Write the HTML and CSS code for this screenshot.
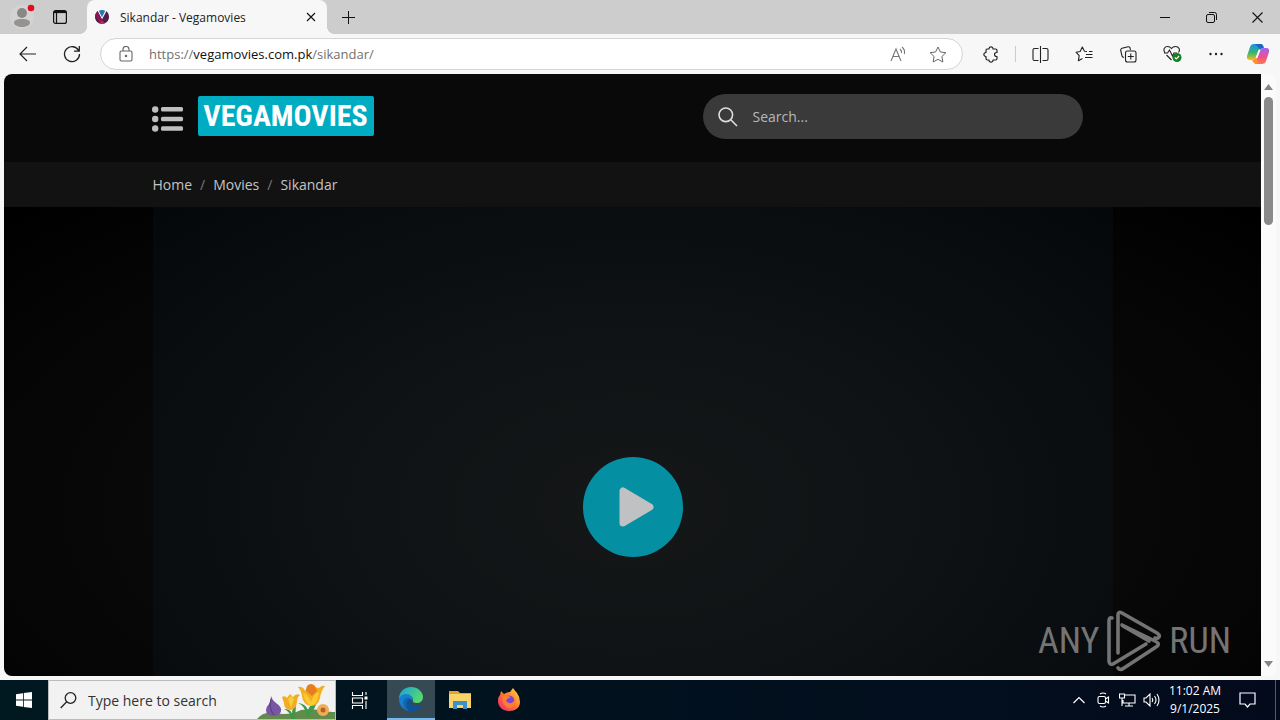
FILE: index.html
```html
<!DOCTYPE html>
<html lang="en">
<head>
<meta charset="utf-8">
<title>Sikandar - Vegamovies</title>
<link rel="stylesheet" href="styles.css">
</head>
<body>
<div class="desktop">
  <div class="tabstrip">
    <button class="profile" aria-label="Profile">
      <svg width="26" height="26" viewBox="0 0 26 26"><circle cx="13" cy="13" r="12" fill="#d5d3d1"/><circle cx="13" cy="9" r="5" fill="#8b8785"/><path d="M5 19c0-3 3-4 8-4s8 1 8 4c0 2-4 4-8 4s-8-2-8-4z" fill="#96928f"/><circle cx="22" cy="4" r="3.3" fill="#e30b20"/></svg>
    </button>
    <button class="workspaces" aria-label="Tab actions">
      <svg width="16" height="16" viewBox="0 0 16 16" fill="none" stroke="#111" stroke-width="1.2"><rect x="1.6" y="1.6" width="12.8" height="12.8" rx="2"/><path d="M2 3h12" stroke-width="2.2"/><path d="M4.500 4v10"/></svg>
    </button>
    <div class="tab">
      <svg width="14" height="14" viewBox="0 0 14 14"><path d="M2.500 1Q0 3.500 0 7c0 4 3.500 7 7 7s7-3 7-7q0-3.500-2.500-6L7 9.500z" fill="#4f1d4c"/><path d="M2.500 1L0 5l4.500 7.500L7 14l2.500-1.500L7 9.500z" fill="#8c1650"/><path d="M3.800.8Q7-.8 10.200.8L7 7.200z" fill="#2478b0"/><path d="M5 13l2-2.500L9 13l-2 1z" fill="#d02765"/></svg>
      <span class="tab-title">Sikandar - Vegamovies</span>
      <button class="tab-close" aria-label="Close tab"><svg width="10" height="10" viewBox="0 0 10 10" stroke="#111" stroke-width="1.1"><path d="M1 1l8 8M9 1L1 9"/></svg></button>
    </div>
    <button class="newtab" aria-label="New tab"><svg width="15" height="15" viewBox="0 0 15 15" stroke="#111"><path d="M7.500 1v13M1 7.500h13"/></svg></button>
    <div class="window-buttons">
      <button aria-label="Minimize"><svg width="10" height="10" viewBox="0 0 10 10" stroke="#111"><path d="M0 5.500h10"/></svg></button>
      <button aria-label="Restore"><svg width="11" height="11" viewBox="0 0 11 11" fill="none" stroke="#111"><rect x=".5" y="2.500" width="8" height="8" rx="1.500"/><path d="M3 .5h5.500a2 2 0 0 1 2 2V8"/></svg></button>
      <button aria-label="Close"><svg width="11" height="11" viewBox="0 0 11 11" stroke="#111" stroke-width="1.100"><path d="M.5.5l10 10M10.500.5l-10 10"/></svg></button>
    </div>
  </div>

  <div class="toolbar">
    <button class="tool" aria-label="Back"><svg width="18" height="16" viewBox="0 0 18 16" fill="none" stroke="#222" stroke-width="1.2"><path d="M8 1L1 8l7 7M1 8h16"/></svg></button>
    <button class="tool" aria-label="Refresh"><svg width="18" height="18" viewBox="0 0 18 18" fill="none" stroke="#222" stroke-width="1.3"><path d="M15.800 6A7.500 7.500 0 1 0 16.500 9M16.300 1v5.200H11"/></svg></button>
    <div class="address">
      <svg width="14" height="16" viewBox="0 0 14 16" fill="none" stroke="#666" stroke-width="1.1"><rect x="1" y="5" width="12" height="10" rx="1.500"/><path d="M4 5V3.500a3 3 0 0 1 6 0V5"/><circle cx="7" cy="10" r=".7" fill="#666"/></svg>
      <div class="url"><span>https://</span>vegamovies.com.pk<span>/sikandar/</span></div>
      <button aria-label="Read aloud"><svg width="17" height="16" viewBox="0 0 17 16" fill="none" stroke="#777" stroke-width="1.1"><path d="M1 15L6 3l5 12M3 10.500h6M10 3q2 2 1.500 4M12 1q3.500 3 2.300 7" /></svg></button>
      <button aria-label="Add to favorites"><svg width="18" height="17" viewBox="0 0 18 17" fill="none" stroke="#666" stroke-linejoin="round"><path d="M9 1l2.400 5 5.500.7-4 3.800 1 5.500L9 13.300 4.100 16l1-5.500-4-3.800 5.500-.7z"/></svg></button>
    </div>
    <button class="tool" aria-label="Extensions"><svg width="16" height="17" viewBox="0 0 16 17" fill="none" stroke="#222" stroke-width="1.2" stroke-linejoin="round"><path d="M4 3h2C5.800.2 10.200.2 10 3h2.500q1.500 0 1.500 1.500v2c-3.300-.3-3.300 4.300 0 4v2q0 1.500-1.500 1.500H10c.2 2.800-4.200 2.800-4 0H4.500Q3 14 3 12.500v-2C.2 10.700.2 6.300 3 6.500v-2Q3 3 4 3z"/></svg></button>
    <span class="tool-sep"></span>
    <button class="tool" aria-label="Split screen"><svg width="17" height="17" viewBox="0 0 17 17" fill="none" stroke="#222" stroke-width="1.1"><path d="M6.500 2.500H2.500q-1.500 0-1.500 1.500v9q0 1.500 1.500 1.500h4M10.500 2.500h4q1.500 0 1.500 1.500v9q0 1.500-1.500 1.500h-4M8.500 0v17"/></svg></button>
    <button class="tool" aria-label="Favorites"><svg width="18" height="17" viewBox="0 0 18 17" fill="none" stroke="#222" stroke-width="1.1" stroke-linejoin="round"><path d="M12 5.500L9.500 5.200 7.300 1 5.200 5.500 1 6.200l3.200 3.500-.8 5L7.500 12.500M11 8.500h6.500M14 5.500h3.500M10 11.500h7.500"/></svg></button>
    <button class="tool" aria-label="Collections"><svg width="17" height="17" viewBox="0 0 17 17" fill="none" stroke="#222" stroke-width="1.1"><path d="M4 11.500q-1.500-.2-2-1.500L.7 4.500Q.5 3 2 2.300L8 .8q1.500-.2 2 1l.5 2"/><rect x="5.500" y="5" width="10.500" height="11" rx="2"/><path d="M10.800 7.500v6M7.800 10.500h6"/></svg></button>
    <button class="tool" aria-label="Browser essentials"><svg width="19" height="18" viewBox="0 0 19 18" fill="none" stroke="#222" stroke-width="1.1"><path d="M2 8C-.5 4 2 1.500 4.500 1.500q2.500 0 4 2 1.500-2 4-2C16 1.500 17.500 5 15.500 7.500M1 8h3.500L6.500 5l3 6L11 8h3M3.500 10l5 5"/><circle cx="14" cy="12.500" r="4.500" fill="#138020" stroke="none"/><path d="M11.800 12.500l1.500 1.500 2.800-3" stroke="#fff"/></svg></button>
    <button class="tool" aria-label="Settings and more"><svg width="14" height="4" viewBox="0 0 14 4" fill="#222"><circle cx="1.500" cy="2" r="1.200"/><circle cx="7" cy="2" r="1.200"/><circle cx="12.500" cy="2" r="1.200"/></svg></button>
    <button class="tool copilot" aria-label="Copilot"><svg width="22" height="20" viewBox="0 0 22 20"><defs><linearGradient id="ca" x2="0" y2="1"><stop stop-color="#1793e8"/><stop offset=".55" stop-color="#37b56f"/><stop offset="1" stop-color="#f8bf18"/></linearGradient><linearGradient id="cb" x2="0" y2="1"><stop stop-color="#a163ed"/><stop offset=".55" stop-color="#ee4f8e"/><stop offset="1" stop-color="#ff7a45"/></linearGradient></defs><path d="M7 0h8l-2 3-4 10q-1 3-4 3H3q-4 0-3-4L3 3q1-3 4-3z" fill="url(#ca)"/><path d="M15 20H8l1-3 4-10q1-3 4-3h2q4 0 3 4l-3 9q-1 3-4 3z" fill="url(#cb)"/><path d="M8 0h6q2 0 3 4-3 0-4 2l-2-3z" fill="#1767c4"/><path d="M5 16q3 0 4-3l2 4-1 3H9q-2 0-4-4z" fill="#ff8b32"/><path d="M11.500 6h1.800l-3 8H8.700z" fill="#f7f7f7"/></svg></button>
  </div>

  <div class="viewport">
    <main class="page">
      <header class="site-header">
        <div class="container header-row">
          <button class="menu" aria-label="Menu"><svg width="32" height="26" viewBox="0 0 32 26" fill="#bfbfbf"><circle cx="3.200" cy="3.500" r="3.200"/><circle cx="3.200" cy="13" r="3.200"/><circle cx="3.200" cy="22.500" r="3.200"/><rect x="9" y="1" width="22" height="4.500" rx="1.500"/><rect x="9" y="10.700" width="22" height="4.500" rx="1.500"/><rect x="9" y="20.300" width="22" height="4.500" rx="1.500"/></svg></button>
          <a class="brand" href="#">VEGAMOVIES</a>
          <label class="search">
            <svg width="20" height="20" viewBox="0 0 20 20" fill="none" stroke="#ddd" stroke-width="1.600"><circle cx="7.800" cy="7.800" r="6.800"/><path d="M12.800 12.800L19 19"/></svg>
            <input type="text" placeholder="Search..." aria-label="Search">
          </label>
        </div>
      </header>
      <nav class="crumbs" aria-label="Breadcrumb">
        <div class="container crumb-row"><a href="#">Home</a><span>/</span><a href="#">Movies</a><span>/</span><a href="#">Sikandar</a></div>
      </nav>
      <section class="hero">
        <div class="container player">
          <button class="play" aria-label="Play"><svg width="100" height="100" viewBox="0 0 100 100"><path d="M40 34v32L67 50z" fill="#bfc1c2" stroke="#bfc1c2" stroke-width="7" stroke-linejoin="round"/></svg></button>
        </div>
      </section>
    </main>
    <div class="scrollbar">
      <svg width="9" height="6" viewBox="0 0 9 6" fill="#858585"><path d="M4.500 0L9 6H0z"/></svg>
      <div class="thumb"></div>
      <svg width="9" height="6" viewBox="0 0 9 6" fill="#858585"><path d="M4.500 6L9 0H0z"/></svg>
    </div>
    <div class="watermark">
      <span>ANY</span>
      <svg width="56" height="62" viewBox="0 0 56 62" fill="none" stroke="#747474" stroke-width="3.600" stroke-linecap="round" stroke-linejoin="round"><path d="M12 43V5q0-4 4-2L51 23q3 2 2 4-1 2-4 1"/><path d="M16 15l33 16q6 3 1 6L18 58q-4 3-6 0"/><path d="M6 8q-3-1-3 3v40q0 4 4 3l33-20"/><path d="M17 16l26 15"/></svg>
      <span>RUN</span>
    </div>
  </div>

  <div class="taskbar">
    <button class="start" aria-label="Start"><svg width="16" height="16" viewBox="0 0 16 16" fill="#fff"><path d="M0 2.200l7-1v6.400H0zM7.800 1L16 0v7.600H7.800zM0 8.400h7v6.400l-7-1zM7.800 8.400H16V16l-8.200-1z"/></svg></button>
    <label class="task-search">
      <svg width="17" height="17" viewBox="0 0 17 17" fill="none" stroke="#222" stroke-width="1.300"><circle cx="10.500" cy="6" r="5.300"/><path d="M6.700 9.800L.7 16"/></svg>
      <input type="text" placeholder="Type here to search" aria-label="Type here to search">
      <svg width="78" height="38" viewBox="0 0 78 38" class="flowers"><path d="M0 38q7-8 18-6 14 3 26-3 14-2 22 1 8 1 12 1v7z" fill="#628b4c"/><path d="M34 38q-1-8-7-10 7 0 8 5 0-7 4-9l-1 14z" fill="#439447"/><path d="M49 33q-1-8-8-11 8 1 10 7 2-6 9-9-2 9-7 12l-1 5z" fill="#3c9b48"/><path d="M14 15q1 4 5 7 6 4 5 8-1 5-7 5-8 0-8-6 0-3 3-6 2-3 2-8z" fill="#7856a3"/><path d="M14 18q-3 9 3 16" stroke="#56367b" fill="none"/><path d="M25 16q3-2 5 1l3-4 3 3q3-4 7-2-3 2-3 7-1 8-7 8-6-1-6-7z" fill="#f2ac22"/><path d="M31 18l3-3 3 3-3 9z" fill="#f7ce3c"/><path d="M41 6q5-1 7 4l3-6 6 2 5 1q3-3 6-2-4 5-5 12-2 8-9 8-8-1-9-10-1-6-4-9z" fill="#f3ae22"/><path d="M50 5q4-4 8 0l2 5-5 5-6-5z" fill="#e87c1e"/><path d="M46 12q4 0 8 9 3-9 8-10-1 12-8 14-6-3-8-13z" fill="#fccb32"/><circle cx="66" cy="29" r="6" fill="#eeae59"/><circle cx="66" cy="29" r="2.500" fill="#bd601f"/></svg>
    </label>
    <div class="apps">
      <button aria-label="Task view"><svg width="18" height="17" viewBox="0 0 18 17" fill="none" stroke="#fff" stroke-width="1.100"><path d="M1.500 0v3.500h10V0M1.500 17v-3.500h10V17M15 0v3M15 9v8"/><path d="M1.500 5.500v6M11.500 5.500v6M1.500 6h10M1.500 11h10"/><path d="M13.500 6h3" stroke-width="3"/></svg></button>
      <button class="active" aria-label="Microsoft Edge"><svg width="24" height="24" viewBox="0 0 24 24"><defs><linearGradient id="eg" x2="1" y2=".5"><stop stop-color="#1ba0dc"/><stop offset="1" stop-color="#54d86d"/></linearGradient></defs><path d="M0 12C0 5 5 0 12 0s12 5 12 10c0 4-3 6-6 6-3 0-5-1-4-3 0-3-3-5-6-5-4 0-7 2-8 4z" fill="url(#eg)"/><path d="M0 12q2-5 7-5c4 0 7 3 7 6-4-2-8 8 3 9-2 2-5 2-7 2C4 23 0 18 0 12z" fill="#1480d2"/><path d="M11 11q-6 6-1 13c-5-1-7-7-5-11q2-3 6-2z" fill="#1467aa"/><path d="M10 24c-6-7 0-14 2-12-2 7 5 8 11 6-3 5-8 7-13 6z" fill="#105298"/></svg></button>
      <button aria-label="File Explorer"><svg width="22" height="18" viewBox="0 0 22 18"><path d="M0 0h9l2 2h11v15H0z" fill="#e7a32f"/><path d="M0 3h22v14H0z" fill="#fbd469"/><path d="M4 10h14v8h-4v-4H8v4H4z" fill="#3b92cb"/></svg></button>
      <button aria-label="Firefox"><svg width="24" height="24" viewBox="0 0 24 24"><defs><linearGradient id="ff" x1="1" x2="0" y2="1"><stop stop-color="#ffe23d"/><stop offset=".5" stop-color="#ff742f"/><stop offset="1" stop-color="#ed247c"/></linearGradient></defs><path d="M3 7l1-4 3 3q3-2 6-2l3-4q2 3 4 5 3 4 3 9c0 6-5 9-11 9S1 19 1 13q0-4 2-6z" fill="url(#ff)"/><circle cx="12" cy="13" r="5.500" fill="#7846d0"/><path d="M5 8q5-1 9 1l-4 2q-2 3 2 4 4 1 6-4 1 8-6 9-7-2-7-12z" fill="#ff7d30"/></svg></button>
    </div>
    <div class="tray">
      <button aria-label="Show hidden icons"><svg width="12" height="8" viewBox="0 0 12 8" fill="none" stroke="#fff" stroke-width="1.200"><path d="M.5 7L6 1.500 11.500 7"/></svg></button>
      <button aria-label="Meet now"><svg width="13" height="16" viewBox="0 0 13 16" fill="none" stroke="#fff" stroke-width="1.100"><rect x="1" y="4.500" width="7.500" height="7" rx="1.500"/><path d="M8.500 7L11.500 5v6l-3-2M3 2q3-2 6 0M3 14q3 2 6 0"/></svg></button>
      <button aria-label="Network"><svg width="17" height="14" viewBox="0 0 17 14" fill="none" stroke="#fff" stroke-width="1.100"><path d="M6 2h10v8H4V7M10 10v3M6 13h8M.5 1h5v4h-5zM3 5v8"/></svg></button>
      <button aria-label="Volume"><svg width="17" height="14" viewBox="0 0 17 14" fill="none" stroke="#fff" stroke-width="1.100"><path d="M1 5h2l4-4v12L3 9H1zM9 5q1.500 2 0 4M11.500 3q3 4 0 8M14 1q4 6 0 12"/></svg></button>
      <div class="clock"><span>11:02 AM</span><span>9/1/2025</span></div>
      <button class="action" aria-label="Notifications"><svg width="17" height="16" viewBox="0 0 17 16" fill="none" stroke="#fff" stroke-width="1.200"><path d="M1 1h15v11h-5l-2.500 3L6 12H1z"/></svg></button>
      <span class="show-desktop"></span>
    </div>
  </div>
</div>
</body>
</html>
```
FILE: styles.css
```css
* { box-sizing: border-box; }
body { margin: 0; font-family: "Open Sans", "Noto Sans", sans-serif; font-size: 14px; }
button { border: 0; padding: 0; background: none; font: inherit; display: flex; align-items: center; justify-content: center; flex: none; }
svg { display: block; flex: none; }
a { color: inherit; text-decoration: none; }
input { border: 0; padding: 0; background: none; font: inherit; outline: 0; min-width: 0; flex: 1; }

.desktop { height: 100vh; display: flex; flex-direction: column; background: #f7f7f7; overflow: hidden; }

.tabstrip { height: 34px; flex: none; display: flex; background: #cdcdcd; }
.profile { width: 44px; }
.workspaces { width: 32px; }
.tab { position: relative; width: 240px; margin-left: 11px; padding: 0 11px 0 8px; display: flex; align-items: center; gap: 11px; background: #f7f7f7; border-radius: 8px 8px 0 0; font-size: 12px; color: #222; }
.tab::before, .tab::after { content: ""; position: absolute; bottom: 0; width: 8px; height: 8px; }
.tab::before { right: 100%; background: radial-gradient(circle at 0 0, transparent 8px, #f7f7f7 8px); }
.tab::after { left: 100%; background: radial-gradient(circle at 100% 0, transparent 8px, #f7f7f7 8px); }
.tab-title { flex: 1; white-space: nowrap; }
.newtab { width: 42px; }
.window-buttons { margin-left: auto; display: flex; }
.window-buttons button { width: 46px; }

.toolbar { height: 40px; flex: none; display: flex; align-items: center; padding: 0 2px 0 6px; }
.tool { width: 44px; height: 32px; }
.copilot { width: 40px; }
.tool-sep { width: 1px; height: 16px; margin: 0 2px; background: #ccc; }
.address { flex: 1; height: 32px; margin: 0 6px; padding: 0 15px 0 18px; display: flex; align-items: center; gap: 16px; background: #fff; border: 1px solid #d4d4d4; border-radius: 16px; }
.address button + button { margin-left: 6px; }
.url { flex: 1; font-size: 13px; color: #111; white-space: nowrap; }
.url span { color: #717171; }

.viewport { position: relative; flex: 1; min-height: 0; margin: 0 4px 4px; display: flex; border-radius: 8px; overflow: hidden; background: #fbfbfb; }
.page { flex: 1; min-width: 0; overflow: hidden; color: #c4c4c4; }
.container { width: 100%; max-width: 960px; margin: 0 auto; }
.site-header { height: 88px; background: #090909; padding-top: 20px; }
.header-row { display: flex; align-items: center; padding-right: 30px; }
.menu { width: 31px; margin-top: 4px; }
.brand { height: 40px; margin: 0 auto 2px 14px; width: 176px; display: flex; align-items: center; justify-content: center; border-radius: 2px; background: #00acc1; color: #fff; font: bold 30px "Liberation Sans Narrow", "Roboto Condensed", "DejaVu Sans Condensed", sans-serif; }
.search { width: 380px; height: 45px; display: flex; align-items: center; gap: 15px; padding: 0 15px; border-radius: 23px; background: #3a3a3a; color: #c0c4c6; }
.search input { color: inherit; }
.search input::placeholder { color: #b4b8ba; opacity: 1; }
.crumbs { background: #121212; }
.crumb-row { height: 45px; display: flex; align-items: center; gap: 8px; }
.crumb-row span { color: #777; }
.hero { height: 600px; background: radial-gradient(ellipse farthest-corner, #131313, #000); }
.player { height: 100%; display: flex; align-items: center; justify-content: center; background: radial-gradient(ellipse farthest-corner, #151718 0%, #0e1214 45%, #04080b 100%); }
.play { width: 100px; height: 100px; border-radius: 50%; background: #048fa2; }
.scrollbar { width: 15px; background: #fbfbfb; display: flex; flex-direction: column; align-items: center; padding: 10px 0 9px; }
.thumb { width: 9px; height: 128px; margin: 7px 0 auto; border-radius: 5px; background: #8a8a8a; }
.watermark { position: absolute; right: 45px; bottom: 4px; display: flex; align-items: center; gap: 7px; color: #747474; font: 36px "Liberation Sans Narrow", "Roboto Condensed", "DejaVu Sans Condensed", sans-serif; }

.taskbar { height: 40px; flex: none; display: flex; background: linear-gradient(90deg, #001820, #02101e 60%, #030a1c); color: #fff; }
.start { width: 48px; }
.task-search { width: 288px; display: flex; align-items: center; gap: 11px; padding-left: 11px; background: #f2f2f2; border: 1px solid #bbb; }
.task-search input { color: #333; }
.task-search input::placeholder { color: #333; opacity: 1; }
.flowers { align-self: flex-end; }
.apps { display: flex; gap: 1px; }
.apps button { width: 48px; }
.apps button:first-child { margin-right: 2px; }
.apps .active { background: #354a53; border-bottom: 2px solid #76b9ed; }
.tray { margin-left: auto; display: flex; }
.tray button { width: 24px; }
.clock { width: 64px; display: flex; flex-direction: column; align-items: center; justify-content: center; font-size: 12px; line-height: 18px; white-space: nowrap; }
.tray .action { width: 40px; }
.show-desktop { width: 5px; margin-left: 8px; border-left: 1px solid #545c66; }
```
